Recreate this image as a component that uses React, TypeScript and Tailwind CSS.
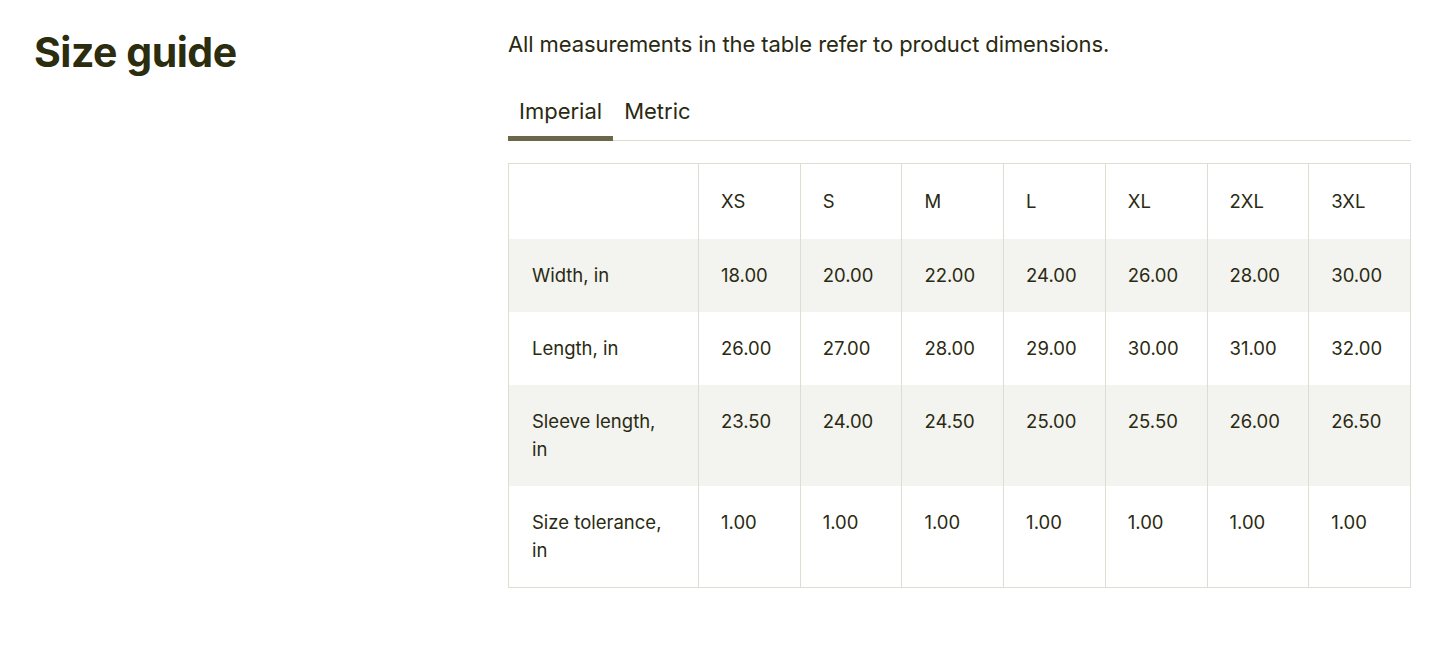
import React, { useState } from 'react'

const sizes = ['XS', 'S', 'M', 'L', 'XL', '2XL', '3XL']

const rows: { label: string; values: string[] }[] = [
  { label: 'Width, in', values: ['18.00', '20.00', '22.00', '24.00', '26.00', '28.00', '30.00'] },
  { label: 'Length, in', values: ['26.00', '27.00', '28.00', '29.00', '30.00', '31.00', '32.00'] },
  { label: 'Sleeve length, in', values: ['23.50', '24.00', '24.50', '25.00', '25.50', '26.00', '26.50'] },
  { label: 'Size tolerance, in', values: ['1.00', '1.00', '1.00', '1.00', '1.00', '1.00', '1.00'] },
]

export default function App() {
  const [tab, setTab] = useState<'imperial' | 'metric'>('imperial')

  return (
    <div className="flex min-h-[648px] bg-white pt-[28px] text-[#2a2a12] [font-family:Inter,'Liberation_Sans',sans-serif]">
      <div className="w-[508px] shrink-0 pl-[34px]">
        <h1 className="m-0 text-[41px] font-bold leading-[48px] tracking-[-0.5px] text-[#2c2c0e]">
          Size guide
        </h1>
      </div>

      <div className="w-[903px] shrink-0">
        <p className="m-0 text-[22px] leading-[32px] tracking-[-0.1px]">
          All measurements in the table refer to product dimensions.
        </p>

        {/* Tabs */}
        <div className="mt-[36px] flex border-b border-[#dedcd0]">
          <button
            onClick={() => setTab('imperial')}
            className={`-mb-px border-b-[5px] px-[11px] pb-[10px] text-[22px] leading-[30px] ${
              tab === 'imperial' ? 'border-[#6a6849]' : 'border-transparent'
            }`}
          >
            Imperial
          </button>
          <button
            onClick={() => setTab('metric')}
            className={`-mb-px border-b-[5px] px-[11px] pb-[10px] text-[22px] leading-[30px] ${
              tab === 'metric' ? 'border-[#6a6849]' : 'border-transparent'
            }`}
          >
            Metric
          </button>
        </div>

        {/* Table */}
        <table className="mt-[22px] w-[903px] table-fixed border-collapse border border-[#dedcd3] text-[18.5px] leading-[28px]">
          <colgroup>
            <col className="w-[190px]" />
            {sizes.map((s) => (
              <col key={s} />
            ))}
          </colgroup>
          <thead>
            <tr className="h-[75px]">
              <th className="border-r border-[#dedcd3]" />
              {sizes.map((s) => (
                <th key={s} className="border-r border-[#dedcd3] px-[22px] text-left align-middle font-normal">
                  {s}
                </th>
              ))}
            </tr>
          </thead>
          <tbody>
            {rows.map((row, i) => (
              <tr key={row.label} className={i % 2 === 0 ? 'bg-[#f3f3ef]' : 'bg-white'}>
                <td className="border-r border-[#dedcd3] py-[22.5px] pl-[23px] pr-[30px] align-top">
                  {row.label}
                </td>
                {row.values.map((v, j) => (
                  <td key={j} className="border-r border-[#dedcd3] px-[22px] py-[22.5px] align-top">
                    {tab === 'imperial' ? v : (parseFloat(v) * 2.54).toFixed(2)}
                  </td>
                ))}
              </tr>
            ))}
          </tbody>
        </table>
      </div>
    </div>
  )
}
